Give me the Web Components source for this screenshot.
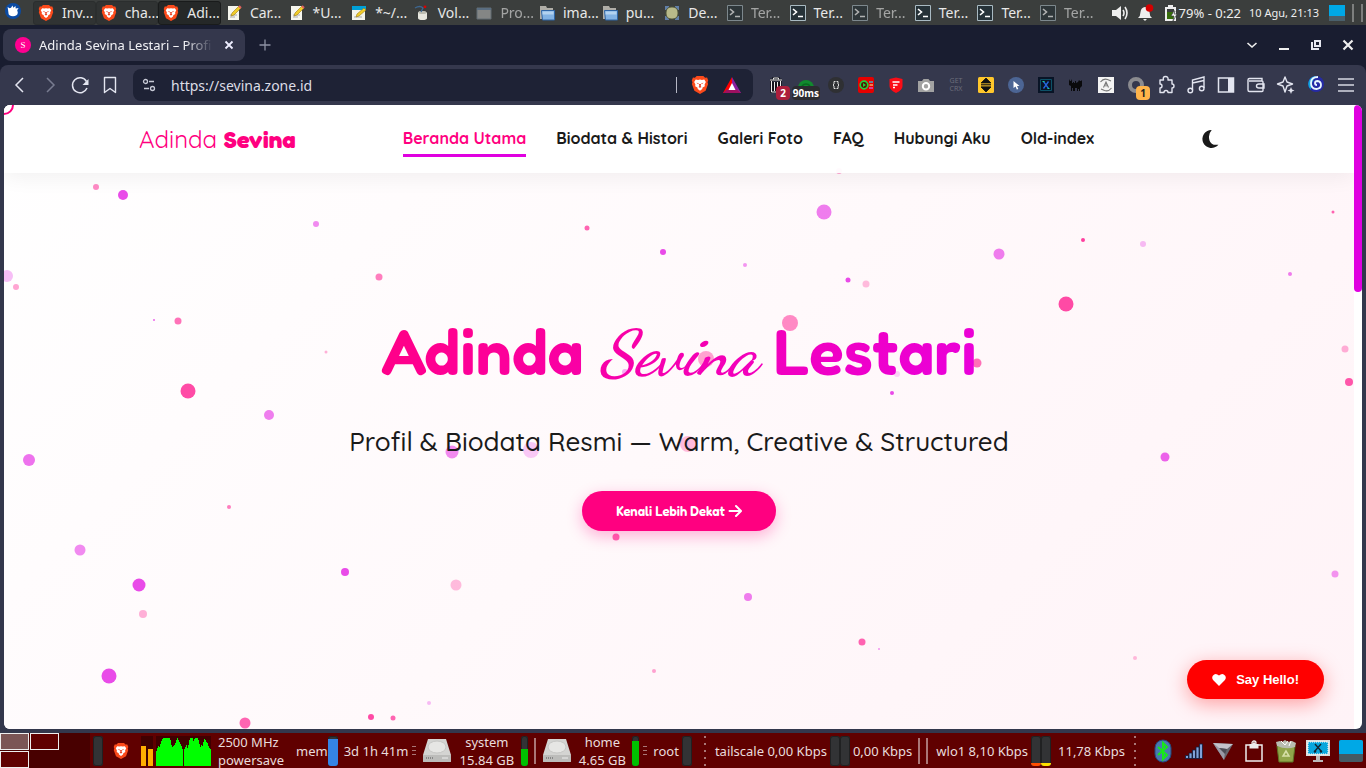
<!DOCTYPE html>
<html lang="id">
<head>
<meta charset="utf-8">
<meta name="viewport" content="width=device-width, initial-scale=1">
<title>Adinda Sevina Lestari</title>
<style>
    html, body {
        margin: 0;
        height: 100%;
    }
    body {
        display: flex;
        flex-direction: column;
        overflow: hidden;
        background: #33374c;
        font-family: "Noto Sans", "Open Sans", sans-serif;
        font-size: 14px;
    }
    .window {
        flex: 1;
        min-height: 0;
        display: flex;
        flex-direction: column;
    }
</style>
</head>
<body>
<top-panel></top-panel>
<div class="window">
    <tab-strip></tab-strip>
    <tool-bar></tool-bar>
    <page-view>
        <site-nav></site-nav>
        <hero-section>
            <span slot="tagline">Profil &amp; Biodata Resmi — Warm, Creative &amp; Structured</span>
            <span slot="action">Kenali Lebih Dekat</span>
        </hero-section>
        <hello-button>Say Hello!</hello-button>
    </page-view>
</div>
<bottom-panel></bottom-panel>

<script>
// every icon of the page, name -> [viewBox size, markup]
const ICONS = {
    mouse: [16, `<circle cx="8" cy="8" r="8" fill="#0b4ba3"/><path d="M3 6.500 2.600 4l2 1.200L6 4.800 7.500 2.600l.8 2.200L10.500 3l.2 2.400L13.600 5l-1.400 2.200.6 2.300c0 2.500-2 3.800-4.800 3.800S3.200 12 3.400 9.500z" fill="#fff"/>`],
    brave: [16, `<path d="M5 0h6l1.500 1.600 1.800-.2L15.300 4l-.6 1.500.5 1.700-2.200 6L8 16l-5-2.800-2.200-6 .5-1.700L.7 4l1-2.600 1.800.2z" fill="#fb4a1b"/><path d="M4.200 3.200 6.300 3.600 8 3.200l1.700.4 2.100-.4 1.400 2.100-1.100 2.300L12.300 9l-2 1.300-.3 1.200L8 13l-2-1.500-.3-1.200-2-1.300.2-1.400-1.100-2.300z" fill="#fff"/><path d="m4.800 6 2 .5-.3.900zM11.200 6l-2 .5.300.9zM7.100 7h1.800L8.600 9l.8.700L8 10.500l-1.400-.8.800-.7z" fill="#e93c20"/>`],
    note: [16, `<path d="M2 1h11v14H2z" fill="#f6f6ee"/><path d="M4 10h7M4 12h5" stroke="#aaa"/><path d="m5 11 1-3 7-7 2 2-7 7z" fill="#f2cd29" stroke="#9b7b12" stroke-width=".6"/><path d="m13 1 2 2" stroke="#e06060" stroke-width="2"/>`],
    noteblue: [16, `<path d="M1 1h13v14H1z" fill="#f4f4ec"/><path d="M1 1h14v4H1z" fill="#00a0d8"/><path d="M3 12h8" stroke="#aaa"/><path d="m5 12 1-3 7-6 2 2-7 6z" fill="#f2cd29" stroke="#9b7b12" stroke-width=".6"/>`],
    jar: [16, `<path d="M4 8q0-2 4-2t5 2v5q0 2-4.500 2T4 13z" fill="#e7e7df"/><ellipse cx="8.500" cy="7.500" rx="4" ry="1.600" fill="#bdbdb2"/><path d="M1 3q5-3 8 0l-2 4" fill="none" stroke="#3d6690" stroke-width="1.400"/><circle cx="11" cy="1.800" r="1.400" fill="#d00"/>`],
    win: [16, `<path d="M1 3h14v11H1z" fill="#b5b7b6" stroke="#7c8b99"/><path d="M1 3h14v2H1z" fill="#6f8dad"/>`],
    folder: [16, `<path d="M1 2V1h6l1 2h6v11H1z" fill="#b0aea8"/><path d="M2.500 5.500h13v9.500h-12z" fill="#82b2e3" stroke="#2f65a5"/><path d="M3.500 6.500h11v3h-11z" fill="#b3d2ef"/>`],
    globe: [16, `<path d="M1 1h4v4H1zM11 1h4v4h-4zM1 11h4v4H1zM11 11h4v4h-4z" fill="#617fa8"/><rect x="2" y="2" width="12" height="12" rx="5" fill="#b8ba8a" stroke="#4b5039"/>`],
    term: [16, `<path d="M.5.500h15v15H.5z" fill="#263238" stroke="#a9bac2"/><path d="m3 4 3.500 3L3 10M8 11.500h5" fill="none" stroke="#fff" stroke-width="1.600"/>`],
    speaker: [18, `<path d="M1 6h4l5-4v14l-5-4H1z" fill="#eee"/><path d="M12 6q2 3 0 6M14 3q4 6 0 12" fill="none" stroke="#eee" stroke-width="1.600"/>`],
    bell: [18, `<path d="M8 3q4 .5 4.500 5 0 4 2.500 6H1q2.500-2 2.500-6Q4 3.500 8 3zM6 15h4l-2 2z" fill="#eee"/><circle cx="12.500" cy="4" r="3.800" fill="#d40000"/>`],
    battery: [18, `<path d="M2 3h3V1h5v2h3v14H2z" fill="#eee"/><path d="M4 5h7v3H4z" fill="#3b3e3d"/><path d="M4 8h7v7H4z" fill="#376d0b"/><path d="m11 7-3 5h3l-1 5 4-7h-3l1-3z" fill="#fff" stroke="#3b3e3d" stroke-width=".7"/>`],
    desktop: [16, `<rect width="16" height="11" fill="#00a8e6"/><path d="M0 11h16v5H0z" fill="#4a606c"/>`],
    close: [16, `<path d="m4.500 4.500 7 7m0-7-7 7" stroke="#eef" stroke-width="1.800"/>`],
    plus: [16, `<path d="M8 2.500v11M2.500 8h11" stroke="#8d91a2" stroke-width="1.300"/>`],
    down: [16, `<path d="m3.500 6 4.500 4 4.500-4" fill="none" stroke="#eee" stroke-width="1.600"/>`],
    min: [16, `<path d="M3 12h10" stroke="#eee" stroke-width="2"/>`],
    restore: [16, `<path d="M4 5v7h7M7 4h5v5H7z" fill="none" stroke="#e6e7f0" stroke-width="2"/>`],
    x: [16, `<path d="m3.500 3.500 9 9m0-9-9 9" stroke="#eee" stroke-width="2.200"/>`],
    back: [20, `<path d="m13 3-7 7 7 7" fill="none" stroke="#e3e5f0" stroke-width="1.500"/>`],
    forward: [20, `<path d="m7 3 7 7-7 7" fill="none" stroke="#787c90" stroke-width="1.500"/>`],
    reload: [20, `<path d="M16.500 6.500A7.500 7.500 0 1 0 17 13" fill="none" stroke="#e3e5f0" stroke-width="1.500"/><path d="M18.500 4v6h-6z" fill="#e3e5f0"/>`],
    bookmark: [20, `<path d="M4.500 2.500h11v15L10 13.500l-5.500 4z" fill="none" stroke="#e3e5f0" stroke-width="1.400" stroke-linejoin="round"/>`],
    tune: [16, `<g fill="none" stroke="#c8cad6" stroke-width="1.300"><circle cx="4.500" cy="4.500" r="2"/><path d="M8 4.500h5M3 11.500h5"/><circle cx="11.500" cy="11.500" r="2"/></g>`],
    bat: [18, `<path d="M9 1 0 17h5L9 9z" fill="#f00"/><path d="M9 1v8l4 8h5z" fill="#8a1f9e"/><path d="M0 17h18l-4-3.500H4z" fill="#9d1060"/><path d="M9 7l-3.500 7h7z" fill="#fff"/>`],
    bin: [16, `<path d="M2 3h12M5.500 2.500V1h5v1.500M3.500 4v11h9V4M6 5v9M8 5v9M10.500 5v9" fill="none" stroke="#11121b" stroke-width="2.400"/><path d="M2 3h12M5.500 2.500V1h5v1.500M3.500 4v11h9V4M6.500 5v9M9.500 5v9" fill="none" stroke="#eee"/>`],
    dome: [16, `<path d="M0 11a8 8 0 0 1 16 0v3H0z" fill="#118a2e"/><path d="M4 9a5 5 0 0 1 8 0" fill="none" stroke="#086a20" stroke-width="1.500"/>`],
    json: [16, `<circle cx="8" cy="8" r="8" fill="#2f3033"/><path d="M7.500 4.500H6V7L5 8l1 1v2.500h1.500M8.500 4.500H10V7l1 1-1 1v2.500H8.500" fill="none" stroke="#ddd"/>`],
    play: [16, `<rect width="16" height="16" rx="2" fill="#e60000"/><circle cx="6" cy="8" r="3.800" fill="#510" stroke="#1fd33c" stroke-width="1.700"/><path d="m5 6 3 2-3 2z" fill="#1fd33c"/><path d="M11 5h4" stroke="#28c8e8" stroke-width="1.300"/><path d="M11.500 8H15" stroke="#ff9"/><path d="M11 11h4" stroke="#d060e0" stroke-width="1.300"/>`],
    shield: [16, `<path d="M1.500 2 8 .5 14.500 2v7q0 4-6.500 7-6.500-3-6.500-7z" fill="#fb0d16"/><path d="M4.500 5h7M5 8h4.500M5 10.500h2" stroke="#fff" stroke-width="1.700"/>`],
    camera: [16, `<path d="M0 4h4l1.500-2h5L12 4h4v11H0z" fill="#a2a2a2"/><circle cx="8" cy="9.200" r="3.200" fill="none" stroke="#fff" stroke-width="2"/>`],
    updown: [16, `<rect width="16" height="16" rx="1.500" fill="#ffc72b"/><path d="m8 1 5 5H3zM8 15l5-5H3zM3 7.500h10M3 9h10" fill="#111" stroke="#111" stroke-width=".8"/>`],
    pointer: [16, `<circle cx="8" cy="8" r="8" fill="#4c6594"/><path d="m5.500 4 6 5H9l1.300 3-1.500.6-1.200-3L5.500 11z" fill="#fff"/>`],
    xbox: [16, `<rect width="16" height="16" fill="#091426"/><path d="M2.500 2.500h11v11h-11z" fill="none" stroke="#0d5268"/><path d="m5.500 4.500 5 7M10.500 4.500l-5 7" stroke="#2467df" stroke-width="1.300"/><path d="M4.500 4.500h2M9.500 11.500h2" stroke="#17cda0"/>`],
    cat: [16, `<path d="M1 2l1 2h1l1-2v4h1V5h1v1h1V4h1v2l2-1 1-2 1 1h1l1-1v6l-1 1-1 1v3h-1v-2h-1v2H9v-3H7v3H5v-3H4v3H3V9L1 8z" fill="#0a0a0c"/>`],
    swirl: [16, `<rect width="16" height="16" fill="#f3f3f3"/><path d="M2.500 5q3-4 7-2.500L13 4M13.500 11q-3 4-7 2.500L3 12M5.500 10.500 8 5l2.500 5.500M8 7.500v2" fill="none" stroke="#777" stroke-width="1.100"/>`],
    ring: [16, `<circle cx="8" cy="8" r="6" fill="none" stroke="#8b8b8f" stroke-width="4"/>`],
    puzzle: [20, `<path d="M4 5h3.500q-1-3.500 2-3.500T12 5h4v4q2 0 2 2t-2 2v4.500h-4q0-2-2-2t-2 2H4V13q2 0 2-2T4 9z" fill="none" stroke="#e3e5f0" stroke-width="1.400" stroke-linejoin="round"/>`],
    music: [20, `<path d="M6.500 15V5L18 2v11M6.500 8 18 5.500" fill="none" stroke="#e3e5f0" stroke-width="1.400"/><g fill="none" stroke="#e3e5f0" stroke-width="1.400"><circle cx="4.300" cy="15.500" r="2.300"/><circle cx="15.700" cy="13.500" r="2.300"/></g>`],
    sidebar: [20, `<path d="M2.500 3h15v14h-15z" fill="none" stroke="#e3e5f0" stroke-width="1.500"/><path d="M12 3h5v14h-5z" fill="#e3e5f0"/>`],
    wallet: [20, `<path d="M16 6V3.500H3.500Q2 3.500 2 5v10q0 1.500 1.500 1.500H16q1 0 1-1V7q0-1-1-1H3M18 9h-5q-2.500 0-2.500 2t2.500 2h5z" fill="none" stroke="#e3e5f0" stroke-width="1.400"/>`],
    sparkle: [20, `<path d="m9 2 2 5 5.500 2L11 11l-2 6-2-6-5.500-2L7 7z" fill="none" stroke="#e3e5f0" stroke-width="1.400" stroke-linejoin="round"/><path d="m15 12 1 2.500 2.500 1L16 16.500 15 19l-1-2.500-2.500-1L14 14.500z" fill="#e3e5f0"/>`],
    spiral: [18, `<circle cx="9" cy="8" r="8" fill="#252aa6"/><path d="M9 0A8 8 0 0 0 4 14q-1-6 5-14z" fill="#12a5d9"/><path d="M11 1Q4 1 4 7t5.500 6Q14 12.500 14 9t-3.500-4Q8 5 8 7t2 2" fill="none" stroke="#e8f6ff" stroke-width="1.800"/>`],
    menu: [20, `<path d="M2 4h16M2 10h16M2 16h16" stroke="#d6d8e2" stroke-width="1.500"/>`],
    moon: [16, `<path d="M9.500 0A8 8 0 1 0 15.500 13Q9 14 7.500 9T9.500 0z" fill="#1a1a1a"/>`],
    arrow: [14, `<path d="M1.500 7h11M8 2l5 5-5 5" fill="none" stroke="#fff" stroke-width="2" stroke-linecap="round" stroke-linejoin="round"/>`],
    heart: [14, `<path d="M7 13 1.300 7.300Q-.6 5 .8 2.700 3.500-.8 7 2.600q3.500-3.400 6.200.1 1.400 2.300-.5 4.600z" fill="#fff"/>`],
    drive: [30, `<path d="m6 3h18l5 16v6q0 1-1 1H2q-1 0-1-1v-6z" fill="#d4d4d2"/><path d="M1 19h28v6q0 1-1 1H2q-1 0-1-1z" fill="#bcbcba"/><ellipse cx="15" cy="11" rx="9" ry="6" fill="#e6e6e4" stroke="#c6c6c4"/><path d="M4 22h8" stroke="#888" stroke-dasharray="1 1" stroke-width="2"/><path d="M20 22h6" stroke="#eee"/>`],
    bluetooth: [24, `<rect x="4" y="1" width="16" height="22" rx="8" fill="#4a78b0" stroke="#24497a"/><path d="m7 8 9 8-4 4V4l4 4-9 8" fill="none" stroke="#16e818" stroke-width="2"/>`],
    signal: [20, `<path d="M1.500 14.500h3v3h-3zM5 12h3v5.500H5zM8.500 9h3v8.500h-3zM12 6h3v11.500h-3zM15.500 3h3v14.500h-3z" fill="#7fa2d8" stroke="#101b38" stroke-width=".8"/>`],
    funnel: [22, `<path d="M1 3 21 4 12 20z" fill="#66666e"/><path d="m1 3 11 17 1-8z" fill="#9a9aa6"/><path d="m1 3 20 1-6 5-8-1z" fill="#c3c3cb"/><path d="m7 8 8 1-2 5z" fill="#4c4c55"/>`],
    clipboard: [22, `<path d="M3 5h16v16H3z" fill="none" stroke="#eee" stroke-width="1.500"/><path d="M6.500 4h3q1.500-4 3 0h3v4.500h-9z" fill="#eee"/><circle cx="11" cy="3" r="2" fill="none" stroke="#eee" stroke-width="1.300"/>`],
    trash: [24, `<path d="M3 7h18l-2 16H5z" fill="#90a54a" stroke="#5d7324"/><path d="M3 7 2 3l4-1 2 1 3-2 3 2 4-1 4 2-1 4q-9 3-18-1z" fill="#b9bdb0"/><path d="m7 2 4 4 3-4M17 2l-2 5" stroke="#fff" fill="none"/><path d="M12 12 9 17h6z" fill="none" stroke="#d7e0a8" stroke-width="1.500"/>`],
    monitor: [24, `<path d="M0 1h24v16H0z" fill="#ddd"/><path d="M2 3h20v12H2z" fill="#0aa6dd" stroke="#fff" stroke-dasharray="1 1"/><path d="m9 5 6 7M15 5l-6 7" stroke="#12232f" stroke-width="1.400"/><circle cx="9" cy="12.500" r="1.200" fill="#12232f"/><circle cx="15" cy="12.500" r="1.200" fill="#12232f"/><path d="M10 17h4v4h3v2H7v-2h3z" fill="#bbb"/>`],
    screen: [24, `<rect y="1" width="24" height="22" rx="2" fill="#455a64"/><path d="M0 3q0-2 2-2h20q2 0 2 2v12H0z" fill="#00a8e6"/>`]
};

// <svg-icon name="brave" size="16">
class SvgIcon extends HTMLElement {
    constructor(){
        super();
        this.attachShadow({mode:"open"})
    }
    connectedCallback(){
        const [box, body] = ICONS[this.getAttribute("name")];
        const size = this.getAttribute("size") || box;
        this.shadowRoot.innerHTML = `
            <style>
                :host { display: inline-flex; flex: none; }
                svg { display: block; }
            </style>
            <svg width="${size}" height="${size}" viewBox="0 0 ${box} ${box}" aria-hidden="true">${body}</svg>`;
    }
}
customElements.define("svg-icon", SvgIcon)

// shared base: clones the template of the class into its shadow root
class TemplateElement extends HTMLElement {
    constructor(){
        super();
        const template = document.createElement("template");
        template.innerHTML = this.markup();
        this.attachShadow({mode:"open"}).appendChild(template.content.cloneNode(true));
    }
}

// one window in the top panel
class TaskButton extends TemplateElement {
    markup(){
        return `
        <style>
            :host { display: block; flex: 1 1 0; min-width: 0; }
            button {
                width: 100%;
                height: 24px;
                display: flex;
                align-items: center;
                gap: 8px;
                padding: 0 4px;
                border: 1px solid transparent;
                border-radius: 3px;
                background: none;
                color: #e8e8e8;
                font: inherit;
                white-space: nowrap;
            }
            :host([group]) button { background: #303333; border-color: #2b2e2e; }
            :host([active]) button { background: #252828; border-color: #191b1b; }
            :host([hidden-window]) button { opacity: .6; }
        </style>
        <button><slot></slot></button>`;
    }
    connectedCallback(){
        const icon = document.createElement("svg-icon");
        icon.setAttribute("name", this.getAttribute("icon"));
        this.shadowRoot.querySelector("button").prepend(icon);
    }
}

const TASKS = [
    ["brave", "Inv...", "group"], ["brave", "cha...", "group"], ["brave", "Adi...", "active"],
    ["note", "Car..."], ["note", "*U..."], ["noteblue", "*~/..."], ["jar", "Vol..."],
    ["win", "Pro...", "hidden-window"], ["folder", "ima..."], ["folder", "pu..."], ["globe", "De..."],
    ["term", "Ter...", "hidden-window"], ["term", "Ter..."], ["term", "Ter...", "hidden-window"],
    ["term", "Ter..."], ["term", "Ter..."], ["term", "Ter...", "hidden-window"]
];

class TopPanel extends TemplateElement {
    markup(){
        return `
        <style>
            :host {
                display: flex;
                align-items: center;
                height: 25px;
                background: #3b3e3d;
                color: #eee;
            }
            .start { width: 33px; padding: 0 0 0 5px; box-sizing: border-box; }
            .tasks { flex: 1; display: flex; min-width: 0; }
            .tray { display: flex; align-items: center; flex: none; padding: 0 3px 0 5px; white-space: nowrap; font-size: 13px; }
            .tray svg-icon { margin-left: 8px; }
            .tray span { margin-left: -2px; }
            .tray time { font-size: 11px; margin: 0 2px 0 8px; }
            i { width: 2px; height: 18px; background: #7d7f7e; margin-left: 7px; }
        </style>
        <div class="start"><svg-icon name="mouse" size="16"></svg-icon></div>
        <div class="tasks">
            ${TASKS.map(([icon, text, state = ""]) => `<task-button icon="${icon}" ${state}>${text}</task-button>`).join("")}
        </div>
        <div class="tray">
            <svg-icon name="speaker"></svg-icon>
            <svg-icon name="bell"></svg-icon>
            <svg-icon name="battery"></svg-icon>
            <span>79% - 0:22</span>
            <time>10 Agu, 21:13</time>
            <svg-icon name="desktop"></svg-icon>
            <i></i><i></i>
        </div>`;
    }
}

class TabStrip extends TemplateElement {
    markup(){
        return `
        <style>
            :host {
                display: flex;
                align-items: center;
                height: 40px;
                padding: 0 10px 0 3px;
                background: #191d30;
            }
            .tab {
                display: flex;
                align-items: center;
                gap: 8px;
                width: 242px;
                height: 32px;
                box-sizing: border-box;
                padding: 0 8px 0 12px;
                border-radius: 8px;
                background: #34374c;
                color: #f1f1f5;
                font-size: 13px;
            }
            .favicon {
                width: 16px;
                height: 16px;
                border-radius: 50%;
                background: #ff0090;
                color: #fff;
                font: 9px/16px "Liberation Serif", serif;
                text-align: center;
            }
            .title {
                flex: 1;
                white-space: nowrap;
                -webkit-mask-image: linear-gradient(to right, #000 84%, transparent);
                mask-image: linear-gradient(to right, #000 84%, transparent);
            }
            button { display: flex; padding: 0; border: 0; background: none; }
            .new { margin-left: 12px; }
            .buttons { display: flex; gap: 16px; margin-left: auto; }
        </style>
        <div class="tab">
            <span class="favicon">S</span>
            <span class="title">Adinda Sevina Lestari – Profi</span>
            <button aria-label="Close tab"><svg-icon name="close"></svg-icon></button>
        </div>
        <button class="new" aria-label="New tab"><svg-icon name="plus"></svg-icon></button>
        <div class="buttons">
            <button aria-label="Search tabs"><svg-icon name="down"></svg-icon></button>
            <button aria-label="Minimize"><svg-icon name="min"></svg-icon></button>
            <button aria-label="Restore"><svg-icon name="restore"></svg-icon></button>
            <button aria-label="Close"><svg-icon name="x"></svg-icon></button>
        </div>`;
    }
}

// extension icons, with an optional badge: [icon, label, badge text, badge class]
const EXTENSIONS = [
    ["bin", "Cleaner", "2", "red"], ["dome", "Ping", "90ms", "dark"], ["json", "JSON"], ["play", "Player"],
    ["shield", "Shield"], ["camera", "Screenshot"], ["", "GET CRX"], ["updown", "Scroll"],
    ["pointer", "Pointer"], ["xbox", "X"], ["cat", "Cat"], ["swirl", "Archive"], ["ring", "Ring", "1", "orange"],
    ["puzzle", "Extensions"], ["music", "Music"], ["sidebar", "Sidebar"], ["wallet", "Wallet"],
    ["sparkle", "Leo"], ["spiral", "Profile"], ["menu", "Menu"]
];

class ToolBar extends TemplateElement {
    markup(){
        return `
        <style>
            :host { display: block; background: #191d30; }
            .bar {
                display: flex;
                align-items: center;
                height: 40px;
                padding: 0 5px;
                border-radius: 8px 8px 0 0;
                background: #35384d;
            }
            button {
                position: relative;
                display: flex;
                align-items: center;
                justify-content: center;
                width: 30px;
                height: 30px;
                padding: 0;
                border: 0;
                background: none;
            }
            .address {
                flex: 1;
                display: flex;
                align-items: center;
                gap: 14px;
                height: 32px;
                min-width: 0;
                box-sizing: border-box;
                margin: 0 8px;
                padding: 0 12px 0 8px;
                border-radius: 8px;
                background: #1e2235;
            }
            input {
                flex: 1;
                min-width: 0;
                padding: 0;
                border: 0;
                outline: 0;
                background: none;
                color: #dcdde6;
                font: inherit;
            }
            .line { width: 1px; height: 16px; background: #b5b7c5; }
            .crx { color: #6b6d7a; font: 7px/8px "Noto Sans", sans-serif; }
            .badge {
                position: absolute;
                right: 1px;
                bottom: 0;
                min-width: 8px;
                padding: 0 3px;
                border-radius: 4px;
                font: bold 10px/14px "Noto Sans", sans-serif;
                color: #fff;
            }
            .red { background: #ac1e3c; }
            .dark { background: #2b2c30; padding: 0 1px; }
            .orange { background: #ffb44a; color: #222; }
        </style>
        <div class="bar">
            <button aria-label="Back"><svg-icon name="back"></svg-icon></button>
            <button aria-label="Forward"><svg-icon name="forward"></svg-icon></button>
            <button aria-label="Reload"><svg-icon name="reload"></svg-icon></button>
            <button aria-label="Bookmark"><svg-icon name="bookmark"></svg-icon></button>
            <div class="address">
                <svg-icon name="tune"></svg-icon>
                <input type="text" aria-label="Address" value="https://sevina.zone.id">
                <span class="line"></span>
                <svg-icon name="brave" size="18"></svg-icon>
                <svg-icon name="bat"></svg-icon>
            </div>
            ${EXTENSIONS.map(([icon, label, badge, kind]) => `
            <button aria-label="${label}">
                ${icon ? `<svg-icon name="${icon}"></svg-icon>` : `<span class="crx">GET<br>CRX</span>`}
                ${badge ? `<span class="badge ${kind}">${badge}</span>` : ""}
            </button>`).join("")}
        </div>`;
    }
}

// floating dots behind the hero: x, y, radius, colour (p = pink, v = violet), opacity
const DOTS = [
    [92,82,3,"p",.45], [119,90,5,"v",.7], [312,119,3,"v",.45], [583,123,2.5,"p",.6], [659,147,3,"v",.7],
    [741,160,2,"v",.4], [820,107,7.5,"v",.5], [844,175,2.500,"v",.7], [862,179,3.500,"p",.25], [995,149,5.500,"v",.5],
    [1079,135,2,"p",.75], [1139,139,3,"v",.25], [1062,199,7.500,"p",.7], [1286,169,2,"v",.5], [1329,107,1.500,"p",.6],
    [1341,244,3.500,"p",.3], [1345,277,4,"p",.65], [3,171,6,"v",.25], [12,182,3,"p",.35], [375,172,3.500,"p",.5],
    [150,215,1,"v",.6], [174,216,3.500,"p",.55], [322,247,1.500,"p",.3], [184,286,7.500,"p",.7], [265,310,5,"v",.5],
    [25,355,6,"v",.55], [225,402,2,"p",.5], [76,445,5.500,"v",.45], [135,480,6.500,"v",.7], [139,509,4,"p",.3],
    [105,571,7.500,"v",.7], [241,618,5.500,"p",.6], [341,467,4,"v",.7], [452,480,5.500,"p",.25], [367,612,3,"p",.7],
    [389,613,2.500,"p",.6], [425,598,2,"v",.25], [448,347,6.500,"v",.45], [527,345,8,"v",.2], [684,339,8,"p",.25],
    [786,218,8,"p",.45], [702,254,8,"p",.35], [621,267,3,"v",.3], [973,258,4.500,"p",.55], [888,288,2,"v",.7],
    [893,269,3,"v",.15], [612,432,3.500,"p",.6], [744,492,4,"v",.5], [858,537,3.500,"p",.6], [875,544,1,"v",.4],
    [650,566,2,"p",.35], [1131,553,2,"p",.25], [1161,352,4.500,"v",.6], [1331,469,3.500,"v",.4], [835,66,3,"p",.35]
];

class DotField extends TemplateElement {
    markup(){
        return `
        <style>
            :host { position: absolute; inset: 0; pointer-events: none; }
            svg { display: block; width: 100%; height: 100%; }
            .p { fill: #ff0080; }
            .v { fill: #e000e0; }
        </style>
        <svg aria-hidden="true">${DOTS.map(([x, y, r, c, o]) =>
            `<circle class="${c}" cx="${x}" cy="${y}" r="${r}" opacity="${o}"/>`).join("")}</svg>`;
    }
}
customElements.define("dot-field", DotField)

// the web page inside the browser window
class PageView extends TemplateElement {
    markup(){
        return `
        <style>
            :host {
                flex: 1;
                min-height: 0;
                display: flex;
                margin: 0 4px 4px;
                border-radius: 6px;
                overflow: hidden;
                background: #fff;
            }
            .page {
                position: relative;
                flex: 1;
                display: flex;
                flex-direction: column;
                min-width: 0;
                overflow: hidden;
                background: linear-gradient(135deg, #fff, #fff3f7);
                color: #1a1a1a;
                font-family: Quicksand, Lato, "Open Sans", sans-serif;
            }
            .track { width: 8px; }
            .thumb { height: 30%; border-radius: 4px; background: #e000e0; }
            /* ring that follows the mouse */
            .cursor {
                position: absolute;
                z-index: 3;
                left: -10px;
                top: -10px;
                width: 16px;
                height: 16px;
                border: 2px solid #ff0080;
                border-radius: 50%;
            }
        </style>
        <div class="page">
            <dot-field></dot-field>
            <slot></slot>
            <div class="cursor"></div>
        </div>
        <div class="track"><div class="thumb"></div></div>`;
    }
}

class SiteNav extends TemplateElement {
    markup(){
        return `
        <style>
            :host {
                position: relative;
                z-index: 2;
                display: block;
                background: rgba(255, 255, 255, .95);
                box-shadow: 0 4px 20px rgba(0, 0, 0, .06);
            }
            nav {
                display: flex;
                align-items: center;
                justify-content: space-between;
                width: 80%;
                height: 68px;
                margin: 0 auto;
            }
            .logo { color: #ff0080; font-size: 24px; text-decoration: none; }
            .logo b { font-family: Fredoka, Quicksand, Lato, sans-serif; font-weight: 700; }
            .links { display: flex; gap: 30px; }
            .links a {
                padding: 6px 0 5px;
                border-bottom: 3px solid transparent;
                color: #1a1a1a;
                font-size: 16px;
                line-height: 22px;
                font-weight: 700;
                text-decoration: none;
                white-space: nowrap;
            }
            .links .current { color: #ff0080; border-color: #e000e0; }
            button { display: flex; padding: 0; border: 0; background: none; }
        </style>
        <nav>
            <a class="logo" href="#">Adinda <b>Sevina</b></a>
            <div class="links">
                <a class="current" href="#">Beranda Utama</a>
                <a href="#biodata">Biodata &amp; Histori</a>
                <a href="#galeri">Galeri Foto</a>
                <a href="#faq">FAQ</a>
                <a href="#kontak">Hubungi Aku</a>
                <a href="#old">Old-index</a>
            </div>
            <button aria-label="Tema gelap"><svg-icon name="moon" size="18"></svg-icon></button>
        </nav>`;
    }
}

class HeroSection extends TemplateElement {
    markup(){
        return `
        <style>
            :host {
                position: relative;
                flex: 1;
                display: flex;
                flex-direction: column;
                align-items: center;
                justify-content: center;
                padding-bottom: 72px;
                text-align: center;
            }
            h1 {
                margin: 0 0 16px;
                background: linear-gradient(135deg, #ff0080, #ff0090 15%, #e800e0);
                -webkit-background-clip: text;
                background-clip: text;
                color: transparent;
                font-family: Fredoka, Quicksand, Lato, sans-serif;
                font-size: 64px;
                line-height: 102px;
                font-weight: 600;
            }
            em { font-family: "Dancing Script", "Liberation Serif", cursive; font-weight: 700; }
            p { margin: 0 0 29px; font-size: 26px; line-height: 41px; font-weight: 500; }
            button {
                display: flex;
                align-items: center;
                gap: 3px;
                height: 40px;
                padding: 0 34px;
                border: 0;
                border-radius: 20px;
                background: #ff0080;
                box-shadow: 0 5px 16px rgba(255, 0, 128, .3);
                color: #fff;
                font: 600 13px Fredoka, Quicksand, Lato, sans-serif;
            }
        </style>
        <h1>Adinda <em>Sevina</em> Lestari</h1>
        <p><slot name="tagline"></slot></p>
        <button><slot name="action"></slot><svg-icon name="arrow"></svg-icon></button>`;
    }
}

class HelloButton extends TemplateElement {
    markup(){
        return `
        <style>
            :host { position: absolute; z-index: 2; right: 30px; bottom: 30px; }
            button {
                display: flex;
                align-items: center;
                gap: 10px;
                height: 39px;
                padding: 0 25px;
                border: 0;
                border-radius: 20px;
                background: #f00;
                box-shadow: 0 5px 20px rgba(255, 0, 0, .35);
                color: #fff;
                font: bold 13px "Liberation Sans", Arial, sans-serif;
            }
        </style>
        <button><svg-icon name="heart"></svg-icon><slot></slot></button>`;
    }
}

// vertical meter, value in percent
class LoadMeter extends TemplateElement {
    markup(){
        return `
        <style>
            :host {
                display: flex;
                align-items: flex-end;
                width: var(--w, 10px);
                height: 30px;
                flex: none;
                border-radius: 3px;
                overflow: hidden;
                background: #323335;
                box-shadow: inset 0 0 0 1px #202122;
            }
            div { width: 100%; background: var(--fill, #00c000); }
        </style>
        <div></div>`;
    }
    connectedCallback(){
        this.shadowRoot.querySelector("div").style.height = (this.getAttribute("value") || 0) + "%";
    }
}
customElements.define("load-meter", LoadMeter)

const CPU = [15,18,20,19,22,25,27,28,28,28,28,28,28,28,26,21,19,20,21,23,26,28,26,24,22,20,17,0,17,19,21,18,21,26,28,28,28,25,27,28,28,28,26,22,19,21,20,24,27,26,24,23,20,18,17];

class BottomPanel extends TemplateElement {
    markup(){
        return `
        <style>
            :host {
                display: flex;
                align-items: center;
                height: 35px;
                overflow: hidden;
                background: #600000;
                color: #e9dcdc;
                font-size: 13px;
                white-space: nowrap;
            }
            .pager, .label, .graph, .bars { flex: none; }
            .pager {
                display: grid;
                grid-template: 17px 17px / 30px 30px 30px;
                gap: 1px 0;
                width: 90px;
                background: #480000;
            }
            .pager button { padding: 0; border: 1px solid transparent; background: none; margin-right: 1px; }
            .pager .open { border-color: #eee; background: #600000; }
            .pager .here { background: #7b5555; }
            .label { box-sizing: border-box; text-align: center; line-height: 18px; }
            .two { height: 35px; }
            .cpu { width: 70px; text-align: left; }
            .disk { width: 69px; }
            .disk2 { width: 60px; }
            .gap { margin-left: 6px; }
            .near { margin-left: 4px; }
            .mem-label { margin-left: 8px; }
            .bars { width: 12px; height: 30px; display: flex; align-items: flex-end; gap: 2px; background: #400000; }
            .bars i { width: 5px; height: 20px; background: #ffae00; }
            .bars i + i { height: 17px; }
            .graph { margin: 0 7px 0 3px; background: #400000; }
            .sep { width: 2px; height: 26px; background: #a77; margin-left: 6px; }
            .dots { width: 2px; height: 30px; margin: 0 9px; background: repeating-linear-gradient(#a77 0 2px, transparent 2px 7px); }
            .grip { width: 4px; height: 10px; margin: 0 6px 0 4px; background: repeating-linear-gradient(#a77 0 1px, transparent 1px 4px); }
            .thin { --w: 7px; }
            .mem { --fill: #3584e4; }
            .net { display: flex; margin: 0 3px; }
            .up { --fill: #ff4d00; }
            .down { --fill: #ffe000; }
            .brave { margin: 0 12px 0 7px; }
            .tray { display: flex; align-items: center; justify-content: space-between; margin-left: auto; width: 212px; padding-right: 3px; }
        </style>
        <div class="pager">
            <button class="open here" aria-label="1"></button><button class="open" aria-label="2"></button><button aria-label="3"></button>
            <button class="open" aria-label="4"></button><button aria-label="5"></button><button aria-label="6"></button>
        </div>
        <div class="net"><load-meter></load-meter></div>
        <svg-icon class="brave" name="brave"></svg-icon>
        <div class="bars"><i></i><i></i></div>
        <svg class="graph" width="55" height="30" aria-hidden="true">${CPU.map((v, i) => `<rect x="${i}" y="${30 - v}" width="1" height="${v}" fill="#0f0"/>`).join("")}</svg>
        <div class="label two cpu">2500 MHz<br>powersave</div>
        <div class="label mem-label">mem</div>
        <load-meter class="mem" value="88"></load-meter>
        <div class="label gap">3d 1h 41m</div>
        <div class="grip"></div>
        <svg-icon name="drive"></svg-icon>
        <div class="label two disk">system<br>15.84 GB</div>
        <load-meter class="thin" value="55"></load-meter>
        <div class="sep"></div>
        <svg-icon name="drive" class="gap"></svg-icon>
        <div class="label two disk2">home<br>4.65 GB</div>
        <load-meter class="thin" value="82"></load-meter>
        <div class="grip"></div>
        <div class="label">root</div>
        <div class="net"><load-meter></load-meter></div>
        <div class="dots"></div>
        <div class="label">tailscale 0,00 Kbps</div>
        <div class="net"><load-meter></load-meter><load-meter></load-meter></div>
        <div class="label">0,00 Kbps</div>
        <div class="sep"></div><div class="sep"></div>
        <div class="label mem-label">wlo1 8,10 Kbps</div>
        <div class="net"><load-meter class="up" value="7"></load-meter><load-meter class="down" value="7"></load-meter></div>
        <div class="label near">11,78 Kbps</div>
        <div class="dots"></div>
        <div class="tray">
            <svg-icon name="bluetooth"></svg-icon>
            <svg-icon name="signal"></svg-icon>
            <svg-icon name="funnel"></svg-icon>
            <svg-icon name="clipboard"></svg-icon>
            <svg-icon name="trash"></svg-icon>
            <svg-icon name="monitor"></svg-icon>
            <svg-icon name="screen"></svg-icon>
        </div>`;
    }
}

customElements.define("task-button", TaskButton)
customElements.define("top-panel", TopPanel)
customElements.define("tab-strip", TabStrip)
customElements.define("tool-bar", ToolBar)
customElements.define("page-view", PageView)
customElements.define("site-nav", SiteNav)
customElements.define("hero-section", HeroSection)
customElements.define("hello-button", HelloButton)
customElements.define("bottom-panel", BottomPanel)
</script>
</body>
</html>
